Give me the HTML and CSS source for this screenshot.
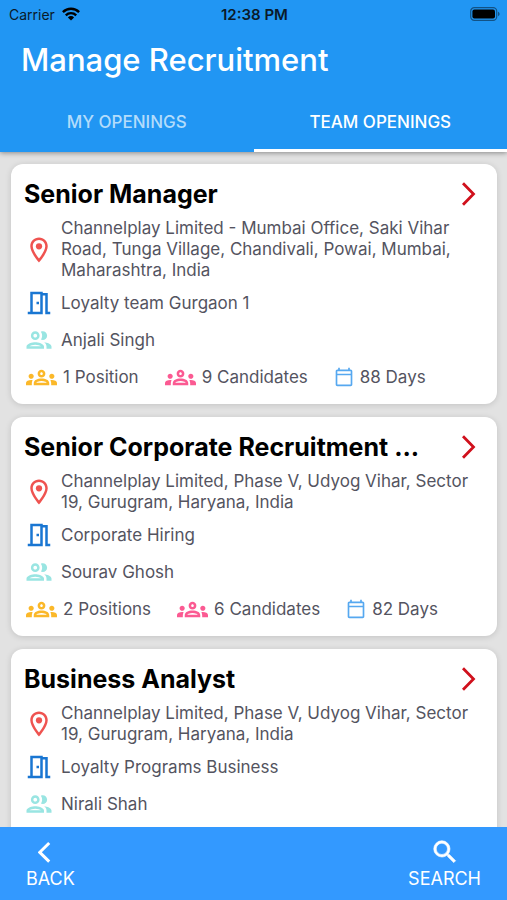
FILE: index.html
```html
<!DOCTYPE html>
<html lang="en">
<head>
<meta charset="utf-8">
<meta name="viewport" content="width=device-width, initial-scale=1">
<title>Manage Recruitment</title>
<link rel="stylesheet" href="styles.css">
</head>
<body>
<svg class="sprite" aria-hidden="true">
  <symbol id="pin" viewBox="0 0 24 24"><path d="M12 2C8.13 2 5 5.13 5 9c0 5.25 7 13 7 13s7-7.75 7-13c0-3.87-3.13-7-7-7zM7 9c0-2.76 2.24-5 5-5s5 2.24 5 5c0 2.88-2.88 7.19-5 9.88C9.92 16.21 7 11.85 7 9z"/><circle cx="12" cy="9" r="2.5"/></symbol>
  <symbol id="door" viewBox="0 0 24 24"><path d="M19 19V4h-4V3H5v16H3v2h12V6h2v15h4v-2h-2zm-6 0H7V5h6v14zm-3-8h2v2h-2z"/></symbol>
  <symbol id="people" viewBox="0 0 24 24"><path d="M9 13.75c-2.34 0-7 1.17-7 3.5V19h14v-1.75c0-2.33-4.66-3.5-7-3.5zM4.34 17c.84-.58 2.87-1.25 4.66-1.25s3.82.67 4.66 1.25H4.34zM9 12c1.93 0 3.5-1.57 3.5-3.5S10.93 5 9 5 5.5 6.57 5.5 8.5 7.07 12 9 12zm0-5c.83 0 1.5.67 1.5 1.5S9.83 10 9 10s-1.5-.67-1.5-1.5S8.17 7 9 7zm7.04 6.81c1.16.84 1.96 1.96 1.96 3.44V19h4v-1.75c0-2.02-3.5-3.17-5.96-3.44zM15 12c1.93 0 3.5-1.57 3.5-3.5S16.93 5 15 5c-.54 0-1.04.13-1.5.35.63.89 1 1.98 1 3.15s-.37 2.26-1 3.15c.46.22.96.35 1.5.35z"/></symbol>
  <symbol id="groups" viewBox="0 0 24 24"><path d="M4 13c1.1 0 2-.9 2-2s-.9-2-2-2-2 .9-2 2 .9 2 2 2zm1.13 1.1c-.37-.06-.74-.1-1.13-.1-.99 0-1.93.21-2.78.58C.48 14.9 0 15.62 0 16.43V18h4.5v-1.61c0-.83.23-1.61.63-2.29zM20 13c1.1 0 2-.9 2-2s-.9-2-2-2-2 .9-2 2 .9 2 2 2zm4 3.43c0-.81-.48-1.53-1.22-1.85-.85-.37-1.79-.58-2.78-.58-.39 0-.76.04-1.13.1.4.68.63 1.46.63 2.29V18H24v-1.57zm-7.76-2.78c-1.17-.52-2.61-.9-4.24-.9s-3.07.39-4.24.9C6.68 14.13 6 15.21 6 16.39V18h12v-1.61c0-1.18-.68-2.26-1.76-2.74zM8.07 16c.09-.23.13-.39.91-.69.97-.38 1.99-.56 3.02-.56s2.05.18 3.02.56c.77.3.81.46.91.69H8.07zM12 8c.55 0 1 .45 1 1s-.45 1-1 1-1-.45-1-1 .45-1 1-1m0-2c-1.66 0-3 1.34-3 3s1.34 3 3 3 3-1.34 3-3-1.34-3-3-3z"/></symbol>
  <symbol id="calendar" viewBox="0 0 24 24"><path d="M20 3h-1V1h-2v2H7V1H5v2H4c-1.1 0-2 .9-2 2v16c0 1.1.9 2 2 2h16c1.1 0 2-.9 2-2V5c0-1.1-.9-2-2-2zm0 18H4V10h16v11zm0-13H4V5h16v3z"/></symbol>
  <symbol id="chevron" viewBox="0 0 28 28"><path d="M7 3.2 17.5 14 7 24.8" fill="none" stroke="currentColor" stroke-width="2.8"/></symbol>
</svg>

<header class="app-bar">
  <div class="status">
    <div class="carrier">
      <span>Carrier</span>
      <svg class="wifi" viewBox="0 0 18 14" aria-hidden="true"><g fill="none" stroke="currentColor" stroke-width="2.4"><path d="M.9 5.1a11.5 11.5 0 0 1 16.2 0"/><path d="M3.8 8.3a7.4 7.4 0 0 1 10.4 0"/></g><path d="M9 13.6 5.9 10.4a4.4 4.4 0 0 1 6.2 0z"/></svg>
    </div>
    <span class="clock">12:38 PM</span>
    <svg class="battery" viewBox="0 0 30 14" aria-hidden="true"><rect x=".7" y=".7" width="26" height="12.6" rx="3.6" fill="none" stroke="currentColor" stroke-opacity=".45" stroke-width="1.2"/><rect x="2.4" y="2.4" width="22.6" height="9.2" rx="2"/><path d="M28 4.8c1 .4 1.6 1.2 1.6 2.2S29 8.8 28 9.2z" fill-opacity=".45"/></svg>
  </div>
  <h1>Manage Recruitment</h1>
  <nav class="tabs">
    <a href="#my">MY OPENINGS</a>
    <a href="#team" class="active" aria-current="page">TEAM OPENINGS</a>
  </nav>
</header>

<main class="list">
  <article class="card">
    <div class="card-head"><h2>Senior Manager</h2><button aria-label="Open"><svg><use href="#chevron"/></svg></button></div>
    <div class="rows">
      <div class="row"><svg class="icon pin"><use href="#pin"/></svg><p>Channelplay Limited - Mumbai Office, Saki Vihar Road, Tunga Village, Chandivali, Powai, Mumbai, Maharashtra, India</p></div>
      <div class="row"><svg class="icon door"><use href="#door"/></svg><p>Loyalty team Gurgaon 1</p></div>
      <div class="row"><svg class="icon people"><use href="#people"/></svg><p>Anjali Singh</p></div>
      <div class="stats">
        <span class="stat"><svg class="groups amber"><use href="#groups"/></svg>1 Position</span>
        <span class="stat"><svg class="groups pink"><use href="#groups"/></svg>9 Candidates</span>
        <span class="stat"><svg class="calendar"><use href="#calendar"/></svg>88 Days</span>
      </div>
    </div>
  </article>

  <article class="card">
    <div class="card-head"><h2>Senior Corporate Recruitment ...</h2><button aria-label="Open"><svg><use href="#chevron"/></svg></button></div>
    <div class="rows">
      <div class="row"><svg class="icon pin"><use href="#pin"/></svg><p>Channelplay Limited, Phase V, Udyog Vihar, Sector 19, Gurugram, Haryana, India</p></div>
      <div class="row"><svg class="icon door"><use href="#door"/></svg><p>Corporate Hiring</p></div>
      <div class="row"><svg class="icon people"><use href="#people"/></svg><p>Sourav Ghosh</p></div>
      <div class="stats">
        <span class="stat"><svg class="groups amber"><use href="#groups"/></svg>2 Positions</span>
        <span class="stat"><svg class="groups pink"><use href="#groups"/></svg>6 Candidates</span>
        <span class="stat"><svg class="calendar"><use href="#calendar"/></svg>82 Days</span>
      </div>
    </div>
  </article>

  <article class="card">
    <div class="card-head"><h2>Business Analyst</h2><button aria-label="Open"><svg><use href="#chevron"/></svg></button></div>
    <div class="rows">
      <div class="row"><svg class="icon pin"><use href="#pin"/></svg><p>Channelplay Limited, Phase V, Udyog Vihar, Sector 19, Gurugram, Haryana, India</p></div>
      <div class="row"><svg class="icon door"><use href="#door"/></svg><p>Loyalty Programs Business</p></div>
      <div class="row"><svg class="icon people"><use href="#people"/></svg><p>Nirali Shah</p></div>
      <div class="stats"></div>
    </div>
  </article>
</main>

<footer class="bottom-bar">
  <button><svg class="back" viewBox="0 0 24 24" aria-hidden="true"><path d="M11.2 3 1.8 12.3l9.4 9.3" fill="none" stroke="currentColor" stroke-width="3"/></svg>BACK</button>
  <button><svg class="search" viewBox="0 0 24 24" aria-hidden="true"><path d="M15.5 14h-.79l-.28-.27A6.471 6.471 0 0 0 16 9.5 6.5 6.5 0 1 0 9.5 16c1.61 0 3.09-.59 4.23-1.57l.27.28v.79l5 4.99L20.49 19l-4.99-5zm-6 0C7.01 14 5 11.99 5 9.5S7.01 5 9.5 5 14 7.01 14 9.5 11.99 14 9.5 14z" stroke="currentColor" stroke-width=".5"/></svg>SEARCH</button>
</footer>
</body>
</html>
```
FILE: styles.css
```css
* {
  box-sizing: border-box;
}

body {
  margin: 0;
  height: 100vh;
  display: flex;
  flex-direction: column;
  overflow: hidden;
  background: #e2e2e2;
  color: #54545f;
  font: 17px/21px Inter, "Liberation Sans", sans-serif;
}

h1,
h2,
p {
  margin: 0;
}

svg {
  display: block;
  flex: none;
  fill: currentColor;
}

button {
  padding: 0;
  border: 0;
  background: none;
  font: inherit;
}

.sprite {
  position: absolute;
  width: 0;
  height: 0;
}

.app-bar {
  position: relative;
  z-index: 1;
  background: #2196f3;
  color: #fff;
  box-shadow: 0 1px 5px rgba(0, 0, 0, 0.4);
}

.status {
  display: grid;
  grid-template-columns: 1fr auto 1fr;
  align-items: center;
  height: 28px;
  padding: 0 7px 0 9px;
  color: #0a1a2a;
  font-size: 14px;
}

.carrier {
  display: flex;
  align-items: center;
  gap: 7px;
}

.wifi {
  width: 18px;
  height: 14px;
  color: #000;
}

.clock {
  font-size: 15px;
  font-weight: 600;
}

.battery {
  justify-self: end;
  width: 30px;
  height: 14px;
  color: #000;
}

h1 {
  padding: 12px 21px;
  font-size: 31px;
  line-height: 40px;
  font-weight: 500;
}

.tabs {
  display: grid;
  grid-template-columns: 1fr 1fr;
}

.tabs a {
  height: 60px;
  padding-top: 20px;
  border-bottom: 3px solid transparent;
  color: #b3dcfb;
  font-size: 17px;
  font-weight: 500;
  text-align: center;
  text-decoration: none;
}

.tabs .active {
  border-color: #fff;
  color: #fff;
}

.list {
  flex: 1;
  min-height: 0;
  overflow: hidden;
  padding: 12px 10px 0 11px;
}

.card {
  margin-bottom: 13px;
  padding: 13px 13px 12px;
  border-radius: 12px;
  background: #fff;
  box-shadow: 0 1px 6px rgba(0, 0, 0, 0.14);
}

.card-head {
  display: flex;
  align-items: center;
  justify-content: space-between;
  height: 33px;
  margin-bottom: 8px;
}

h2 {
  color: #000;
  font-size: 25px;
  line-height: 32px;
  font-weight: 700;
  white-space: nowrap;
}

.card-head svg {
  width: 28px;
  height: 28px;
  color: #d0101c;
}

.rows {
  display: flex;
  flex-direction: column;
  gap: 7px;
}

.row {
  display: flex;
  align-items: center;
  gap: 7px;
}

.icon {
  width: 30px;
  height: 30px;
}

.pin {
  color: #ef5350;
}

.door {
  color: #1976d2;
}

.people {
  color: #99e5e2;
}

.stats {
  display: flex;
  align-items: center;
  gap: 26px;
  height: 30px;
  padding-left: 2px;
}

.stat {
  display: flex;
  align-items: center;
  gap: 6px;
}

.groups {
  width: 31px;
  height: 31px;
}

.amber {
  color: #fbb829;
}

.pink {
  color: #fb5a92;
}

.calendar {
  width: 20px;
  height: 20px;
  color: #56a8f0;
}

.bottom-bar {
  display: flex;
  justify-content: space-between;
  padding: 10px 26px 9px;
  background: #3399ff;
}

.bottom-bar button {
  display: flex;
  flex-direction: column;
  align-items: center;
  color: #fff;
  font-size: 18px;
  line-height: 24px;
}

.back {
  width: 24px;
  height: 30px;
}

.search {
  width: 30px;
  height: 30px;
}
```
